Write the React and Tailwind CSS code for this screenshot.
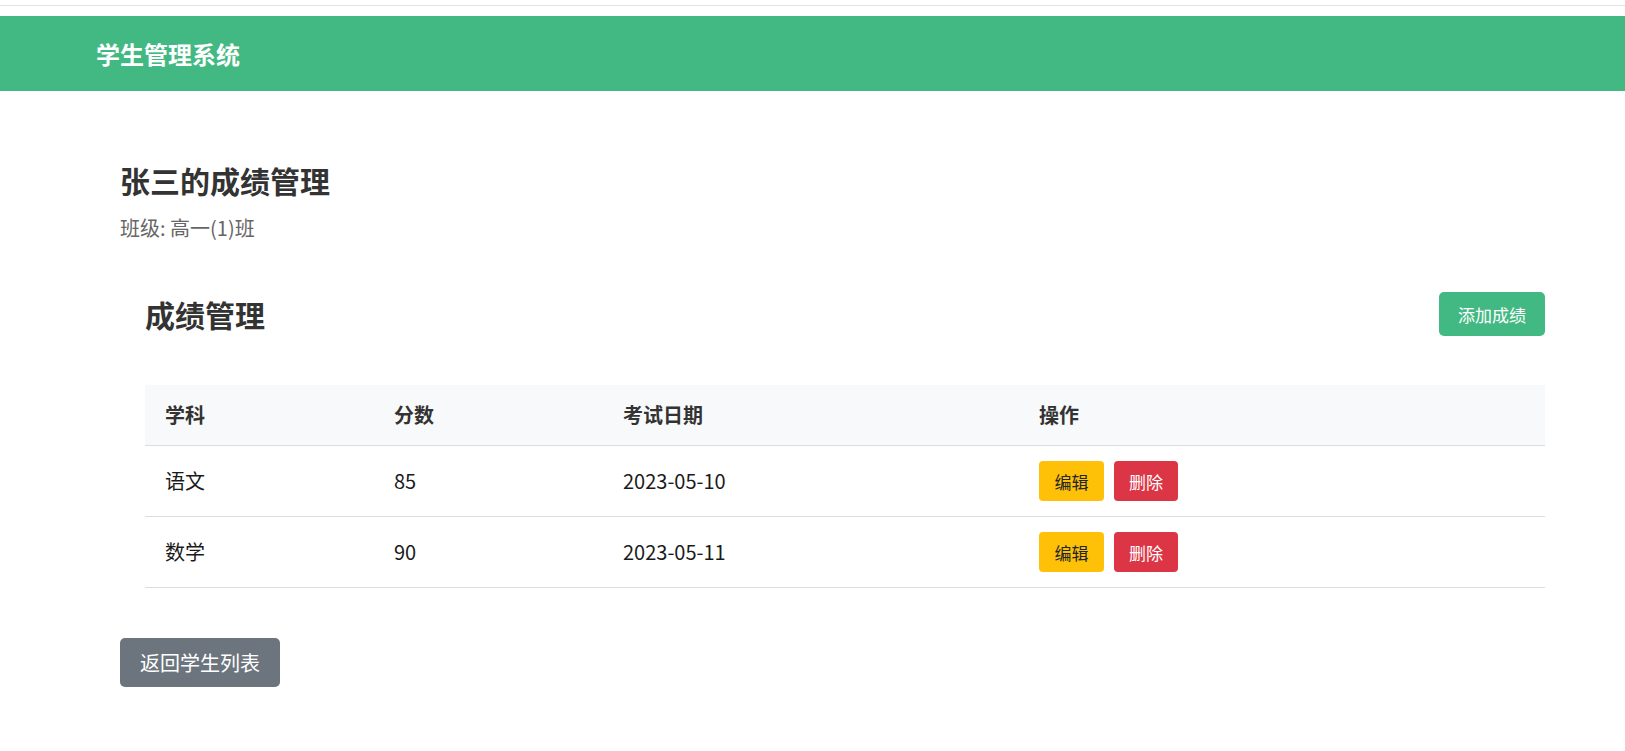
import React from "react";

const grades = [
  { id: 1, subject: "语文", score: 85, date: "2023-05-10" },
  { id: 2, subject: "数学", score: 90, date: "2023-05-11" },
];

export default function App() {
  return (
    <div className="min-h-screen bg-white font-['Noto_Sans_CJK_SC',sans-serif] text-[#333]">
      {/* top strip */}
      <div className="h-[5px]" />
      <div className="h-px bg-[#e2e2e2]" />
      <div className="h-[10px]" />

      {/* Header */}
      <header className="h-[75px] bg-[#42b983] flex items-center pl-[96px]">
        <h1 className="text-[24px] leading-none font-bold text-white">学生管理系统</h1>
      </header>

      <main className="w-[1570px] pl-[120px] pt-[71px]">
        <h2 className="text-[30px] leading-[36px] font-bold text-[#333]">张三的成绩管理</h2>
        <p className="mt-[16px] text-[20px] leading-[28px] text-[#666]">班级: 高一(1)班</p>

        <section className="mt-[50px] px-[25px]">
          <div className="flex items-center justify-between h-[44px]">
            <h3 className="text-[30px] leading-[36px] font-bold text-[#333]">成绩管理</h3>
            <button className="h-[44px] px-[19px] rounded-[5px] bg-[#42b983] text-white text-[17px] leading-none">
              添加成绩
            </button>
          </div>

          <table className="mt-[49px] w-full table-fixed border-collapse text-left text-[20px] leading-[30px]">
            <colgroup>
              <col className="w-[229px]" />
              <col className="w-[229px]" />
              <col className="w-[416px]" />
              <col />
            </colgroup>
            <thead>
              <tr className="bg-[#f8f9fa] border-b border-[#dddddd]">
                <th className="px-[20px] py-[15px] font-bold text-[#333]">学科</th>
                <th className="px-[20px] py-[15px] font-bold text-[#333]">分数</th>
                <th className="px-[20px] py-[15px] font-bold text-[#333]">考试日期</th>
                <th className="px-[20px] py-[15px] font-bold text-[#333]">操作</th>
              </tr>
            </thead>
            <tbody>
              {grades.map((g) => (
                <tr key={g.id} className="border-b border-[#dddddd] text-[#1a1a1a]">
                  <td className="px-[20px] py-[15px]">{g.subject}</td>
                  <td className="px-[20px] py-[15px]">{g.score}</td>
                  <td className="px-[20px] py-[15px]">{g.date}</td>
                  <td className="px-[20px] py-[15px]">
                    <div className="flex items-center gap-[10px]">
                      <button className="h-[40px] w-[65px] rounded-[4px] bg-[#ffc107] text-[#212529] text-[17px] leading-none">
                        编辑
                      </button>
                      <button className="h-[40px] w-[64px] rounded-[4px] bg-[#dc3545] text-white text-[17px] leading-none">
                        删除
                      </button>
                    </div>
                  </td>
                </tr>
              ))}
            </tbody>
          </table>
        </section>

        <button className="mt-[50px] h-[49px] px-[20px] rounded-[5px] bg-[#6c757d] text-white text-[20px] leading-none">
          返回学生列表
        </button>
      </main>
    </div>
  );
}
